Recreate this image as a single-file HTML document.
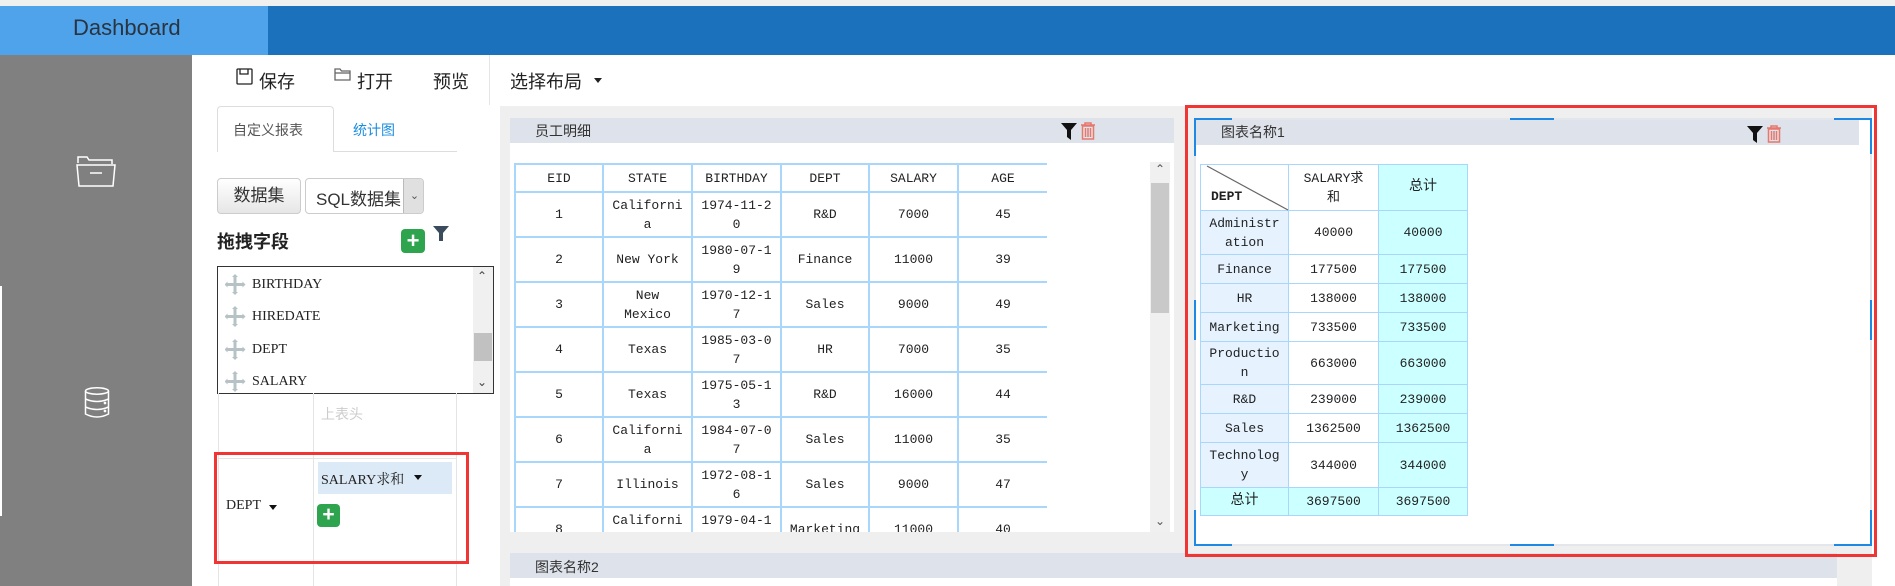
<!DOCTYPE html>
<html><head><meta charset="utf-8"><style>
*{box-sizing:border-box;margin:0;padding:0}
body{width:1895px;height:586px;overflow:hidden;background:#fff;position:relative;font-family:"Liberation Sans","Noto Sans CJK SC",sans-serif;color:#333}
.a{position:absolute}
table{border-collapse:collapse;font-family:"Liberation Mono","Noto Sans CJK SC",monospace;font-size:13px;color:#222;table-layout:fixed}
td{border:2px solid #a9d7fb;text-align:center;word-break:break-all;line-height:19px;padding:0 5px}
.t2 td{border:1.5px solid #a9d7fb}
.hdr{background:#dee2ea;font-size:14px;color:#333}
</style></head><body>
<div class="a" style="left:0;top:0;width:1895px;height:6px;background:#f0f0f0"></div>
<div class="a" style="left:0;top:6px;width:268px;height:49px;background:#4fa3ea"></div>
<div class="a" style="left:268px;top:6px;width:1627px;height:49px;background:#1c71bd"></div>
<div class="a" style="left:73px;top:15px;font-size:22px;color:#2a3440">Dashboard</div>
<div class="a" style="left:0;top:55px;width:192px;height:531px;background:#808080"></div>
<div class="a" style="left:0;top:286px;width:2px;height:230px;background:#fff"></div>
<svg class="a" style="left:76px;top:155px" width="40" height="32" viewBox="0 0 40 32" fill="none" stroke="#fff" stroke-width="1.5"><path d="M2 8 L2 2 L11 2 L13 5 L36 5 L36 9"/><path d="M1 10 L39 10 L37 31 L3 31 Z"/><path d="M14 18 L26 18"/></svg>
<svg class="a" style="left:84px;top:387px" width="26" height="31" viewBox="0 0 26 31" fill="none" stroke="#fff" stroke-width="1.5"><ellipse cx="13" cy="4" rx="11.5" ry="3.2"/><path d="M1.5 4 V27 Q13 33 24.5 27 V4"/><path d="M1.5 12 Q13 17 24.5 12"/><path d="M1.5 20 Q13 25 24.5 20"/><circle cx="21" cy="16" r=".6"/><circle cx="21" cy="24" r=".6"/></svg>
<svg class="a" style="left:236px;top:68px" width="17" height="17" viewBox="0 0 17 17" fill="none" stroke="#222" stroke-width="1.3"><rect x="1" y="1" width="15" height="15" rx="1"/><path d="M4 1 V6 H12 V1"/></svg>
<div class="a" style="left:259px;top:68px;font-size:18px;color:#222">保存</div>
<svg class="a" style="left:334px;top:68px" width="18" height="14" viewBox="0 0 18 14" fill="none" stroke="#666" stroke-width="1.3"><path d="M1 12 V1 H6 L7.5 3 H16 V12 Z"/><path d="M1 5 H16"/></svg>
<div class="a" style="left:357px;top:68px;font-size:18px;color:#222">打开</div>
<div class="a" style="left:433px;top:68px;font-size:18px;color:#222">预览</div>
<div class="a" style="left:489px;top:55px;width:1px;height:50px;background:#e6e6e6"></div>
<div class="a" style="left:510px;top:68px;font-size:18px;color:#222">选择布局</div>
<div class="a" style="left:594px;top:78px;border-left:4px solid transparent;border-right:4px solid transparent;border-top:5px solid #222"></div>
<div class="a" style="left:217px;top:106px;width:117px;height:46px;border:1px solid #ddd;border-bottom:none;border-radius:4px 4px 0 0;background:#fff"></div>
<div class="a" style="left:334px;top:151px;width:123px;height:1px;background:#ddd"></div>
<div class="a" style="left:233px;top:120px;font-size:14px;color:#555">自定义报表</div>
<div class="a" style="left:353px;top:120px;font-size:14px;color:#1a8ee0">统计图</div>
<div class="a" style="left:217px;top:178px;width:84px;height:36px;border:1px solid #ccc;border-radius:4px;background:linear-gradient(#fff,#e6e6e6);font-size:17px;color:#333;text-align:center;line-height:34px">数据集</div>
<div class="a" style="left:305px;top:178px;width:119px;height:36px;border:1px solid #ccc;border-radius:4px;background:#fff;overflow:hidden"><div style="position:absolute;left:10px;top:6px;font-size:17px;color:#333;white-space:nowrap">SQL数据集</div><div style="position:absolute;left:97px;top:0;width:22px;height:36px;background:#e0e0e0;border-left:1px solid #bbb;text-align:center;font-size:11px;line-height:34px;color:#555">&#8964;</div></div>
<div class="a" style="left:217px;top:228px;font-size:18px;font-weight:bold;color:#222">拖拽字段</div>
<div class="a" style="left:401px;top:229px;width:24px;height:24px;background:#2ea44f;border-radius:4px;color:#fff;font-size:22px;line-height:23px;text-align:center;font-weight:bold">+</div>
<svg class="a" style="left:433px;top:226px" width="16" height="16" viewBox="0 0 16 16"><path d="M0 0 H16 L10 7 V15 L6 15 V7 Z" fill="#3a4b5e"/></svg>
<div class="a" style="left:217px;top:266px;width:277px;height:128px;border:1px solid #333;background:#fff;overflow:hidden;font-family:'Liberation Serif',serif;font-size:14px;color:#222">
<div style="position:absolute;left:34px;top:10px">BIRTHDAY</div>
<div style="position:absolute;left:34px;top:42px">HIREDATE</div>
<div style="position:absolute;left:34px;top:75px">DEPT</div>
<div style="position:absolute;left:34px;top:107px">SALARY</div>
<div style="position:absolute;left:255px;top:0;width:20px;height:126px;background:#f0f0f0"></div>
<div style="position:absolute;left:256px;top:66px;width:18px;height:28px;background:#c1c1c1"></div>
<div style="position:absolute;left:259px;top:2px;font-size:12px;color:#444">&#8963;</div>
<div style="position:absolute;left:259px;top:108px;font-size:12px;color:#444">&#8964;</div>
</div>
<svg class="a" style="left:225px;top:274px" width="22" height="118" viewBox="0 0 22 118" fill="#b7c2c6"><g id="m"><path d="M10 0 L13 3 H11.5 V9 H17.5 V7.5 L20.5 10.5 L17.5 13.5 V12 H11.5 V18 H13 L10 21 L7 18 H8.5 V12 H2.5 V13.5 L-0.5 10.5 L2.5 7.5 V9 H8.5 V3 H7 Z"/></g><use href="#m" y="32"/><use href="#m" y="65"/><use href="#m" y="97"/></svg>
<div class="a" style="left:218px;top:393px;width:1px;height:193px;background:#e4e4e4"></div>
<div class="a" style="left:313px;top:393px;width:1px;height:193px;background:#e4e4e4"></div>
<div class="a" style="left:456px;top:393px;width:1px;height:193px;background:#e4e4e4"></div>
<div class="a" style="left:218px;top:458px;width:238px;height:1px;background:#e4e4e4"></div>
<div class="a" style="left:321px;top:404px;font-size:14px;color:#ccc">上表头</div>
<div class="a" style="left:318px;top:462px;width:134px;height:32px;background:#dce9f6"></div>
<div class="a" style="left:321px;top:469px;font-family:'Liberation Serif','Noto Serif CJK SC',serif;font-size:14px;color:#222">SALARY求和</div>
<div class="a" style="left:414px;top:475px;border-left:4px solid transparent;border-right:4px solid transparent;border-top:5px solid #111"></div>
<div class="a" style="left:226px;top:498px;font-family:'Liberation Serif',serif;font-size:14px;color:#222">DEPT</div>
<div class="a" style="left:269px;top:505px;border-left:4px solid transparent;border-right:4px solid transparent;border-top:5px solid #111"></div>
<div class="a" style="left:317px;top:504px;width:23px;height:23px;background:#2ea44f;border-radius:4px;color:#fff;font-size:21px;line-height:22px;text-align:center;font-weight:bold">+</div>
<div class="a" style="left:214px;top:452px;width:255px;height:112px;border:3px solid #f03535"></div>
<div class="a" style="left:500px;top:106px;width:1372px;height:480px;background:#efefef"></div>
<div class="a" style="left:510px;top:118px;width:664px;height:414px;background:#fff"></div>
<div class="a hdr" style="left:510px;top:118px;width:664px;height:25px"><span style="position:absolute;left:25px;top:3px">员工明细</span></div>
<svg class="a" style="left:1061px;top:123px" width="16" height="17" viewBox="0 0 16 17"><path d="M0 0 H16 L10 7 V17 L6 14 V7 Z" fill="#111"/></svg>
<svg class="a" style="left:1080px;top:122px" width="16" height="18" viewBox="0 0 16 18" fill="none" stroke="#e8776c" stroke-width="1.5"><path d="M1 3 H15 M5 3 V1 H11 V3"/><rect x="2.5" y="4" width="11" height="13"/><path d="M5.5 6 V15 M8 6 V15 M10.5 6 V15"/></svg>
<div class="a" style="left:514px;top:163px;width:533px;height:369px;overflow:hidden">
<table style="width:533px">
<colgroup><col style="width:88px"><col style="width:89px"><col style="width:89px"><col style="width:88px"><col style="width:89px"><col style="width:90px"></colgroup>
<tr style="height:28px"><td>EID</td><td>STATE</td><td>BIRTHDAY</td><td>DEPT</td><td>SALARY</td><td>AGE</td></tr>
<tr style="height:45px"><td>1</td><td>Californi a</td><td>1974-11-2 0</td><td>R&amp;D</td><td>7000</td><td>45</td></tr>
<tr style="height:45px"><td>2</td><td>New York</td><td>1980-07-1 9</td><td>Finance</td><td>11000</td><td>39</td></tr>
<tr style="height:45px"><td>3</td><td>New<br>Mexico</td><td>1970-12-1 7</td><td>Sales</td><td>9000</td><td>49</td></tr>
<tr style="height:45px"><td>4</td><td>Texas</td><td>1985-03-0 7</td><td>HR</td><td>7000</td><td>35</td></tr>
<tr style="height:45px"><td>5</td><td>Texas</td><td>1975-05-1 3</td><td>R&amp;D</td><td>16000</td><td>44</td></tr>
<tr style="height:45px"><td>6</td><td>Californi a</td><td>1984-07-0 7</td><td>Sales</td><td>11000</td><td>35</td></tr>
<tr style="height:45px"><td>7</td><td>Illinois</td><td>1972-08-1 6</td><td>Sales</td><td>9000</td><td>47</td></tr>
<tr style="height:45px"><td>8</td><td>Californi a</td><td>1979-04-1 5</td><td>Marketing</td><td>11000</td><td>40</td></tr>
</table></div>
<div class="a" style="left:1150px;top:162px;width:20px;height:370px;background:#f0f0f0"></div>
<div class="a" style="left:1151px;top:183px;width:18px;height:130px;background:#c9c9c9"></div>
<div class="a" style="left:1155px;top:162px;font-size:12px;color:#555">&#8963;</div>
<div class="a" style="left:1155px;top:514px;font-size:12px;color:#555">&#8964;</div>
<div class="a hdr" style="left:510px;top:553px;width:1327px;height:25px"><span style="position:absolute;left:25px;top:4px">图表名称2</span></div>
<div class="a" style="left:510px;top:578px;width:1327px;height:8px;background:#fff"></div>
<div class="a" style="left:1194px;top:118px;width:678px;height:428px;background:#fff;border:2px solid #e3e6ea"></div>
<div class="a hdr" style="left:1196px;top:120px;width:663px;height:25px"><span style="position:absolute;left:25px;top:2px">图表名称1</span></div>
<svg class="a" style="left:1747px;top:126px" width="16" height="17" viewBox="0 0 16 17"><path d="M0 0 H16 L10 7 V17 L6 14 V7 Z" fill="#111"/></svg>
<svg class="a" style="left:1766px;top:125px" width="16" height="18" viewBox="0 0 16 18" fill="none" stroke="#e8776c" stroke-width="1.5"><path d="M1 3 H15 M5 3 V1 H11 V3"/><rect x="2.5" y="4" width="11" height="13"/><path d="M5.5 6 V15 M8 6 V15 M10.5 6 V15"/></svg>
<div class="a" style="left:1194px;top:118px;width:38px;height:2px;background:#1e88e5"></div>
<div class="a" style="left:1194px;top:118px;width:2px;height:38px;background:#1e88e5"></div>
<div class="a" style="left:1834px;top:118px;width:38px;height:2px;background:#1e88e5"></div>
<div class="a" style="left:1870px;top:118px;width:2px;height:36px;background:#1e88e5"></div>
<div class="a" style="left:1510px;top:118px;width:44px;height:2px;background:#1e88e5"></div>
<div class="a" style="left:1194px;top:300px;width:2px;height:40px;background:#1e88e5"></div>
<div class="a" style="left:1194px;top:510px;width:2px;height:36px;background:#1e88e5"></div>
<div class="a" style="left:1194px;top:544px;width:38px;height:2px;background:#1e88e5"></div>
<div class="a" style="left:1510px;top:544px;width:44px;height:2px;background:#1e88e5"></div>
<div class="a" style="left:1834px;top:544px;width:38px;height:2px;background:#1e88e5"></div>
<div class="a" style="left:1870px;top:510px;width:2px;height:36px;background:#1e88e5"></div>
<div class="a" style="left:1870px;top:300px;width:2px;height:40px;background:#1e88e5"></div>
<table class="a t2" style="left:1200px;top:164px;width:267px">
<colgroup><col style="width:88px"><col style="width:90px"><col style="width:89px"></colgroup>
<tr style="height:46px"><td style="position:relative;text-align:left;padding:0"><svg style="position:absolute;left:0;top:0" width="88" height="46"><line x1="6" y1="1" x2="87" y2="45" stroke="#666" stroke-width="1.2"/></svg><b style="position:absolute;left:10px;top:22px">DEPT</b></td><td>SALARY求<br>和</td><td style="background:#ccffff;font-size:14px">总计</td></tr>
<tr style="height:44px"><td style="background:#e6f3ff">Administr ation</td><td>40000</td><td style="background:#ccffff">40000</td></tr>
<tr style="height:29px"><td style="background:#e6f3ff">Finance</td><td>177500</td><td style="background:#ccffff">177500</td></tr>
<tr style="height:29px"><td style="background:#e6f3ff">HR</td><td>138000</td><td style="background:#ccffff">138000</td></tr>
<tr style="height:29px"><td style="background:#e6f3ff">Marketing</td><td>733500</td><td style="background:#ccffff">733500</td></tr>
<tr style="height:43px"><td style="background:#e6f3ff">Productio n</td><td>663000</td><td style="background:#ccffff">663000</td></tr>
<tr style="height:29px"><td style="background:#e6f3ff">R&amp;D</td><td>239000</td><td style="background:#ccffff">239000</td></tr>
<tr style="height:29px"><td style="background:#e6f3ff">Sales</td><td>1362500</td><td style="background:#ccffff">1362500</td></tr>
<tr style="height:45px"><td style="background:#e6f3ff">Technolog y</td><td>344000</td><td style="background:#ccffff">344000</td></tr>
<tr style="height:28px"><td style="background:#ccffff;font-size:14px">总计</td><td style="background:#ccffff">3697500</td><td style="background:#ccffff">3697500</td></tr>
</table>
<div class="a" style="left:1185px;top:105px;width:692px;height:452px;border:3px solid #f03535"></div>
</body></html>
